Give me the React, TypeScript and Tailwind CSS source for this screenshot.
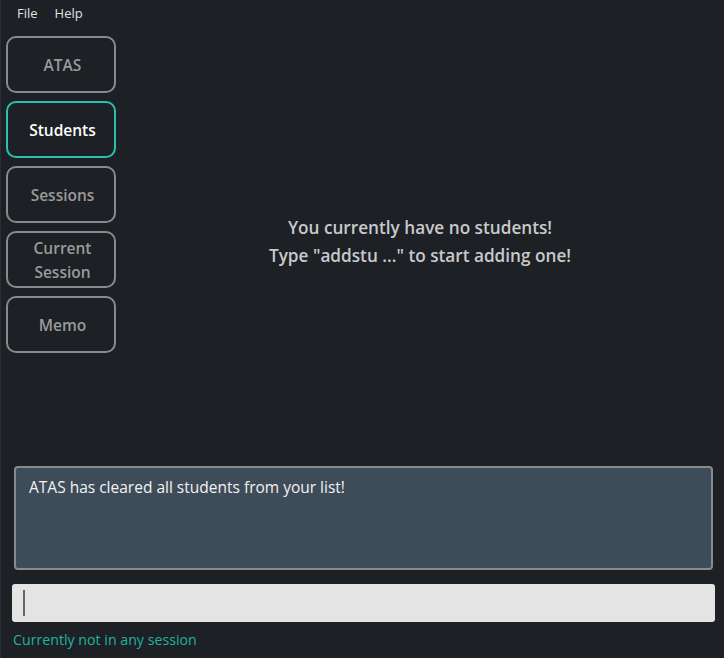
import React from "react";

const font = { fontFamily: '"Open Sans", "Noto Sans", "Liberation Sans", sans-serif' };

function NavButton({ label, active }: { label: React.ReactNode; active?: boolean }) {
  return (
    <div
      className={`w-[110px] h-[57px] rounded-[10px] border-2 flex items-center justify-center text-center font-semibold text-[15.5px] leading-[24px] pl-[3px] ${
        active ? "border-[#27c3b0] text-white" : "border-[#8a8a8a] text-[#9a9a9a]"
      }`}
    >
      {label}
    </div>
  );
}

export default function App() {
  return (
    <div style={font} className="w-[724px] h-[658px] bg-[#1d2025] flex flex-col overflow-hidden border-l border-l-[#2b2e33]">
      <div className="h-[28px] flex items-center gap-[17px] pl-[16px] text-[13px] text-[#e0e0e0]">
        <span>File</span>
        <span>Help</span>
      </div>
      <div className="flex h-[428px]">
        <div className="flex flex-col gap-[8px] pl-[5px] pt-[8px]">
          <NavButton label="ATAS" />
          <NavButton label="Students" active />
          <NavButton label="Sessions" />
          <NavButton label={<>Current<br />Session</>} />
          <NavButton label="Memo" />
        </div>
        <div className="flex-1 flex items-center justify-center">
          <div className="text-center font-semibold text-[17.2px] leading-[28px] text-[#c9c9c9]">
            You currently have no students!
            <br />
            Type "addstu ..." to start adding one!
          </div>
        </div>
      </div>
      <div className="pl-[13px] pr-[11px] pt-[10px]">
        <div className="h-[104px] rounded-[4px] border-2 border-[#8a8a8a] bg-[#3e4c59] px-[13px] pt-[8px] text-[15.5px] text-[#f2f2f2]">
          ATAS has cleared all students from your list!
        </div>
      </div>
      <div className="pl-[11px] pr-[9px] pt-[14px]">
        <div className="h-[38px] rounded-[3px] bg-[#e4e4e4] flex items-center pl-[11px]">
          <div className="w-[2px] h-[26px] bg-[#666]" />
        </div>
      </div>
      <div className="pl-[12px] pt-[7px] text-[14.2px] text-[#1fb39f]">Currently not in any session</div>
    </div>
  );
}
